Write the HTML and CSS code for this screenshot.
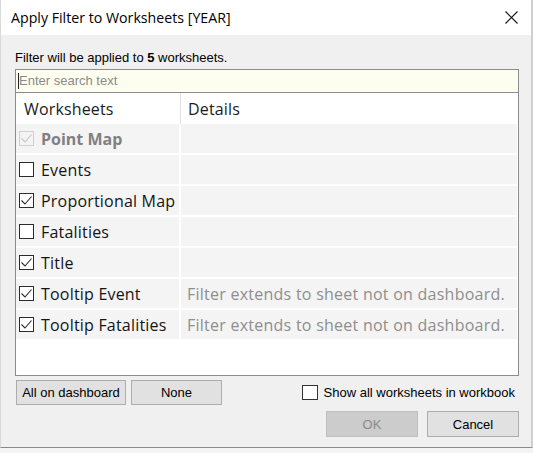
FILE: index.html
```html
<!DOCTYPE html>
<html>
<head>
<meta charset="utf-8">
<link rel="stylesheet" href="styles.css">
</head>
<body>
<div class="window">
  <div class="titlebar">
    <span class="title">Apply Filter to Worksheets [YEAR]</span>
    <svg class="close" width="13" height="13" viewBox="0 0 13 13"><path d="M0.5 0.5 L12.5 12.5 M12.5 0.5 L0.5 12.5" stroke="#111" stroke-width="1.1" fill="none"/></svg>
  </div>
  <div class="content">
    <p class="info">Filter will be applied to <b>5</b> worksheets.</p>
    <div class="list">
      <div class="search"><span class="caret"></span><span class="placeholder">Enter search text</span></div>
      <div class="table">
        <div class="head">
          <div class="hcell first">Worksheets</div>
          <div class="hcell">Details</div>
        </div>
        <div class="row disabled">
          <div class="cell name"><span class="box"><svg width="13" height="13" viewBox="0 0 13 13"><polyline points="1.5,6.5 5,10 11.5,2.5" fill="none" stroke-width="1.1"/></svg></span><span class="label">Point Map</span></div>
          <div class="cell"></div>
        </div>
        <div class="row">
          <div class="cell name"><span class="box"></span><span class="label">Events</span></div>
          <div class="cell"></div>
        </div>
        <div class="row">
          <div class="cell name"><span class="box"><svg width="13" height="13" viewBox="0 0 13 13"><polyline points="1.5,6.5 5,10 11.5,2.5" fill="none" stroke-width="1.1"/></svg></span><span class="label">Proportional Map</span></div>
          <div class="cell"></div>
        </div>
        <div class="row">
          <div class="cell name"><span class="box"></span><span class="label">Fatalities</span></div>
          <div class="cell"></div>
        </div>
        <div class="row">
          <div class="cell name"><span class="box"><svg width="13" height="13" viewBox="0 0 13 13"><polyline points="1.5,6.5 5,10 11.5,2.5" fill="none" stroke-width="1.1"/></svg></span><span class="label">Title</span></div>
          <div class="cell"></div>
        </div>
        <div class="row">
          <div class="cell name"><span class="box"><svg width="13" height="13" viewBox="0 0 13 13"><polyline points="1.5,6.5 5,10 11.5,2.5" fill="none" stroke-width="1.1"/></svg></span><span class="label">Tooltip Event</span></div>
          <div class="cell detail">Filter extends to sheet not on dashboard.</div>
        </div>
        <div class="row">
          <div class="cell name"><span class="box"><svg width="13" height="13" viewBox="0 0 13 13"><polyline points="1.5,6.5 5,10 11.5,2.5" fill="none" stroke-width="1.1"/></svg></span><span class="label">Tooltip Fatalities</span></div>
          <div class="cell detail">Filter extends to sheet not on dashboard.</div>
        </div>
      </div>
    </div>
    <div class="controls">
      <button class="btn wide">All on dashboard</button>
      <button class="btn none">None</button>
      <label class="showall"><span class="box small"></span><span>Show all worksheets in workbook</span></label>
    </div>
    <div class="actions">
      <button class="btn action ok">OK</button>
      <button class="btn action">Cancel</button>
    </div>
  </div>
</div>
</body>
</html>
```

FILE: styles.css
```css
html, body {
  margin: 0;
  padding: 0;
  width: 533px;
  height: 453px;
  overflow: hidden;
  background: #f4f4f4;
}

.window {
  width: 530px;
  height: 447px;
  border-left: 1px solid #dadada;
  border-right: 2px solid #cfcfcf;
  border-bottom: 1px solid #8a8a8a;
  background: #f0f0f0;
  display: flex;
  flex-direction: column;
}

.titlebar {
  height: 35px;
  flex: none;
  background: #ffffff;
  display: flex;
  align-items: center;
  padding-left: 10px;
}

.title {
  font-family: "Open Sans", "Noto Sans", sans-serif;
  font-size: 14.2px;
  color: #000;
}

.close {
  margin-left: auto;
  margin-right: 13px;
  display: block;
}

.content {
  padding: 0 12px 0 14px;
  font-family: "Liberation Sans", Arial, sans-serif;
  font-size: 13px;
}

.info {
  margin: 15px 0 4px 0;
  line-height: 15px;
  color: #000;
}

.list {
  width: 504px;
  box-sizing: border-box;
  border: 1px solid #8c8c8c;
  background: #ffffff;
}

.search {
  height: 23px;
  box-sizing: border-box;
  border-bottom: 1px solid #8c8c8c;
  background: #fefef0;
  display: flex;
  align-items: center;
  padding-left: 2px;
}

.caret {
  width: 1px;
  height: 16px;
  background: #222;
}

.placeholder {
  color: #8a8a8a;
  font-size: 13px;
  position: relative;
  top: -1px;
}

.table {
  height: 282px;
  font-family: "Open Sans", "Noto Sans", sans-serif;
  font-size: 16px;
}

.head {
  display: grid;
  grid-template-columns: 165px 1fr;
  height: 31px;
  align-items: stretch;
  color: #1c1c1c;
}

.hcell {
  display: flex;
  align-items: center;
  padding-left: 7px;
  letter-spacing: 0.15px;
}

.hcell.first {
  box-sizing: border-box;
  border-right: 1px solid #e2e2e2;
  padding-left: 8px;
}

.row {
  display: grid;
  grid-template-columns: 163px 1fr;
  column-gap: 2px;
  padding-bottom: 2px;
  margin-right: 1px;
  background: #ffffff;
}

.cell {
  height: 29px;
  background: #f4f4f4;
  display: flex;
  align-items: center;
}

.cell.name {
  padding-left: 3px;
  color: #141414;
}

.label {
  margin-left: 7px;
  letter-spacing: 0.2px;
}

.cell.detail {
  padding-left: 6px;
  color: #8e8e8e;
  letter-spacing: 0.25px;
}

.box {
  width: 13px;
  height: 13px;
  border: 1px solid #2b2b2b;
  background: #ffffff;
  flex: none;
  display: block;
}

.box svg {
  display: block;
  stroke: #2b2b2b;
}

.row.disabled .box {
  border-color: #cfcfcf;
  background: #f4f4f4;
}

.row.disabled .box svg {
  stroke: #c4c4c4;
}

.row.disabled .label {
  font-weight: 700;
  color: #808080;
  letter-spacing: 0;
}

.controls {
  display: flex;
  align-items: center;
  margin-top: 4px;
  padding-left: 1px;
  padding-right: 4px;
  height: 25px;
}

.btn {
  font-family: "Liberation Sans", Arial, sans-serif;
  font-size: 13px;
  color: #000;
  background: #e1e1e1;
  border: 1px solid #adadad;
  border-radius: 0;
  padding: 0;
  margin: 0;
  box-sizing: border-box;
}

.btn.wide {
  width: 110px;
  height: 25px;
}

.btn.none {
  width: 91px;
  height: 25px;
  margin-left: 5px;
}

.showall {
  margin-left: auto;
  display: flex;
  align-items: center;
  color: #000;
}

.box.small {
  width: 14px;
  height: 13px;
  margin-right: 6px;
  border-color: #333;
}

.actions {
  display: flex;
  justify-content: flex-end;
  gap: 9px;
  margin-top: 6px;
}

.btn.action {
  width: 92px;
  height: 26px;
}

.btn.ok {
  background: #cccccc;
  border-color: #bfbfbf;
  color: #8a8a8a;
}
```
